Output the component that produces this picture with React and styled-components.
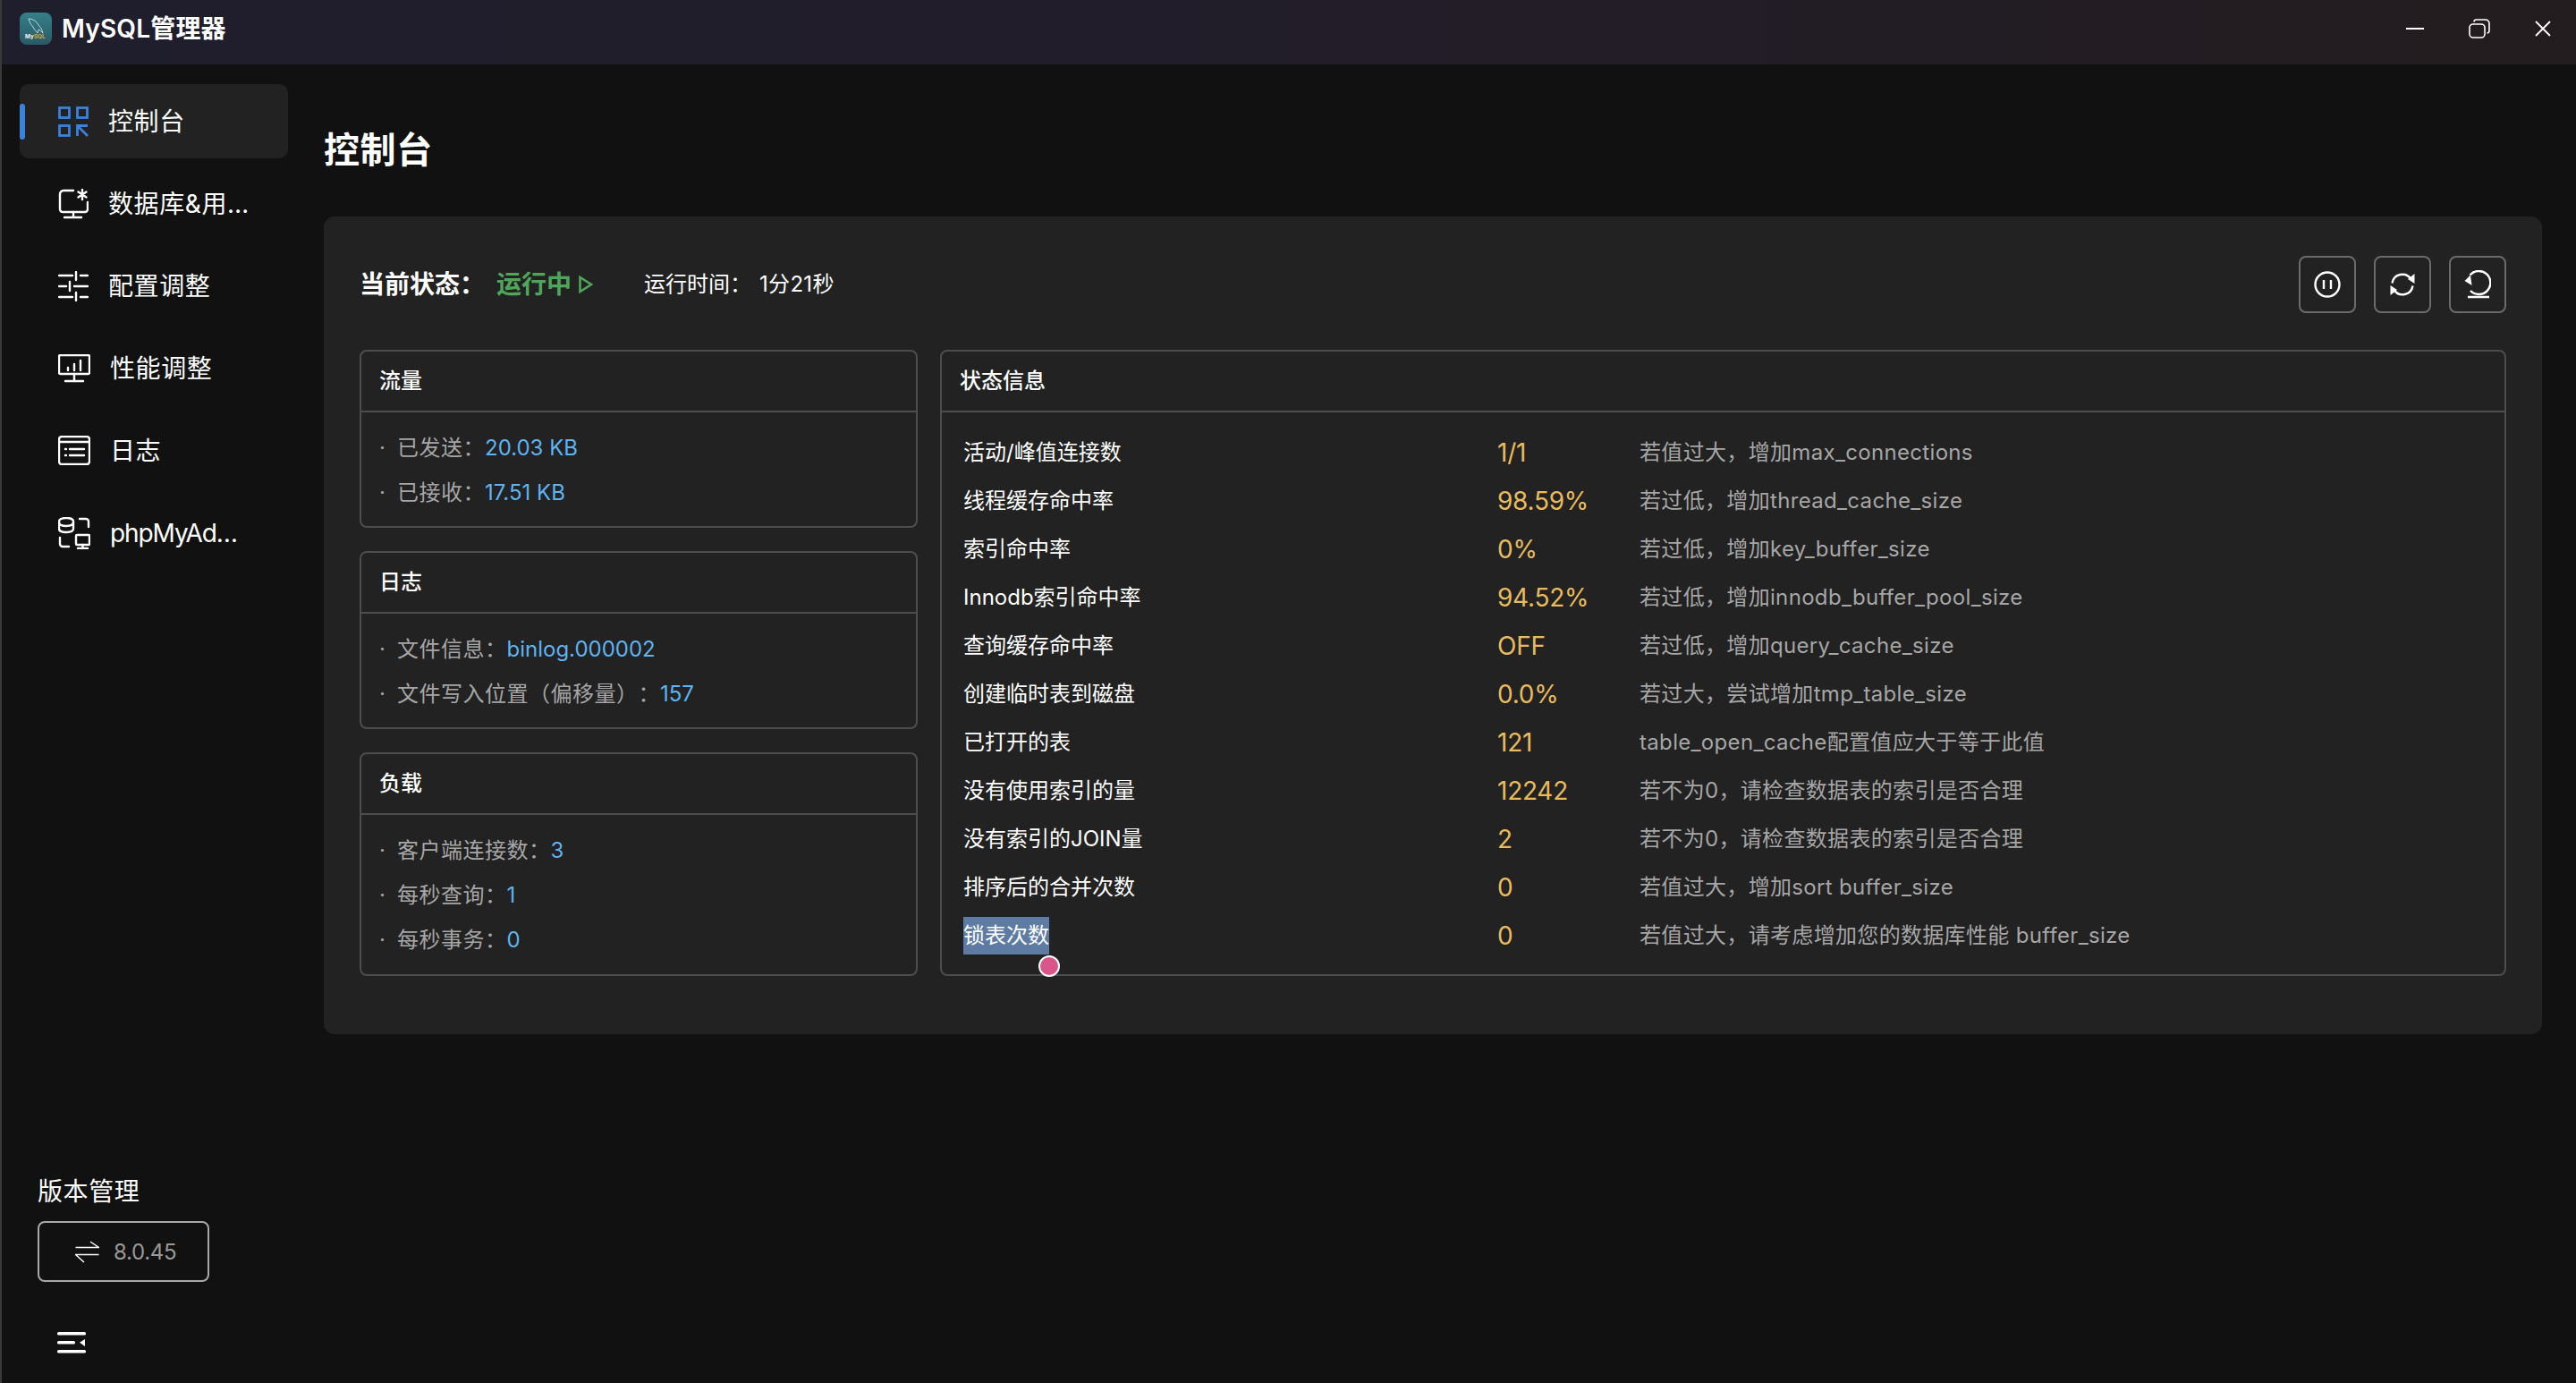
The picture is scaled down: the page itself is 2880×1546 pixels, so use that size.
import React from 'react';
import styled, { createGlobalStyle } from 'styled-components';

const GlobalStyle = createGlobalStyle`
  html, body {
    margin: 0;
    padding: 0;
    background: #111111;
  }

  body {
    font-family: Inter, "Noto Sans CJK SC", sans-serif;
    color: #ffffff;
    text-spacing-trim: space-all;
  }

  * {
    box-sizing: border-box;
  }
`;

const Shell = styled.div`
  display: flex;
  flex-direction: column;
  width: 2880px;
  height: 1546px;
  overflow: hidden;
  border-left: 2px solid #3a3a3a;
  background: #111111;
`;

const TitleBar = styled.header`
  display: flex;
  align-items: center;
  flex: 0 0 72px;
  padding: 0 28px 8px 20px;
  background: linear-gradient(90deg, #1f1e2c 0%, #211d2b 40%, #231d1f 100%);
`;

const AppName = styled.h1`
  flex: 1;
  margin: 0 0 0 11px;
  font-size: 28px;
  line-height: 36px;
  font-weight: 600;
  letter-spacing: 0.2px;
`;

const WindowControls = styled.div`
  display: flex;
  align-items: center;
  gap: 50px;

  svg {
    display: block;
  }
`;

const Body = styled.div`
  display: flex;
  flex: 1;
  min-height: 0;
`;

const Sidebar = styled.aside`
  display: flex;
  flex-direction: column;
  flex: 0 0 342px;
  padding: 22px 22px 33px 20px;
`;

const Nav = styled.nav`
  display: flex;
  flex-direction: column;
  gap: 9px;
  flex: 1;
`;

const NavItem = styled.div`
  position: relative;
  display: flex;
  align-items: center;
  gap: 22px;
  height: 83px;
  padding-left: 43px;
  border-radius: 10px;
  background: ${({ $active }) => ($active ? '#222222' : 'transparent')};

  ${({ $active }) =>
    $active &&
    `
    &::before {
      content: "";
      position: absolute;
      left: 0;
      top: 22px;
      width: 6px;
      height: 40px;
      border-radius: 3px;
      background: #3b82dd;
    }
  `}
`;

const NavIcon = styled.span`
  display: flex;
  align-items: center;
  justify-content: center;
  flex: 0 0 34px;
  height: 36px;
`;

const NavLabel = styled.span`
  padding-top: 1px;
  font-size: 28px;
  line-height: 40px;
  white-space: nowrap;
  letter-spacing: ${({ $tight }) => ($tight ? '-1.1px' : '0.6px')};
`;

const VersionBlock = styled.div`
  padding-left: 20px;
`;

const VersionTitle = styled.div`
  font-size: 28px;
  line-height: 40px;
  letter-spacing: 0.6px;
`;

const VersionButton = styled.button`
  display: flex;
  align-items: center;
  gap: 16px;
  width: 192px;
  height: 68px;
  margin-top: 13px;
  padding: 0 0 0 40px;
  border: 2px solid #a8a8a8;
  border-radius: 8px;
  background: transparent;
  color: #999999;
  font-family: inherit;
  font-size: 24px;
  letter-spacing: -0.3px;
`;

const CollapseButton = styled.div`
  display: flex;
  margin: 56px 0 0 22px;
`;

const Main = styled.main`
  flex: 1;
  min-width: 0;
  padding: 0 38px 0 18px;
`;

const PageTitle = styled.h2`
  margin: 0;
  height: 170px;
  font-size: 40px;
  line-height: 192px;
  font-weight: 700;
  letter-spacing: 0.6px;
`;

const Panel = styled.section`
  padding: 44px 40px 65px;
  border-radius: 12px;
  background: #222222;
`;

const StatusBar = styled.div`
  display: flex;
  align-items: center;
  height: 64px;
  margin-bottom: 41px;
  line-height: 34px;
`;

const StatusName = styled.span`
  font-size: 28px;
  font-weight: 700;
`;

const StatusValue = styled.span`
  display: flex;
  align-items: center;
  gap: 8px;
  margin-left: 13px;
  color: #4fa65a;
  font-size: 28px;
  font-weight: 600;
`;

const Uptime = styled.span`
  margin-left: 57px;
  font-size: 24px;
`;

const UptimeValue = styled.span`
  margin-left: 9px;
  font-size: 24px;
  letter-spacing: 0.3px;
`;

const Actions = styled.div`
  display: flex;
  gap: 20px;
  margin-left: auto;
`;

const ActionButton = styled.button`
  display: flex;
  align-items: center;
  justify-content: center;
  width: 64px;
  height: 64px;
  padding: 0;
  border: 2px solid #6b6b6b;
  border-radius: 8px;
  background: transparent;
`;

const Columns = styled.div`
  display: grid;
  grid-template-columns: 624px 1fr;
  gap: 25px;
`;

const LeftColumn = styled.div`
  display: flex;
  flex-direction: column;
  gap: 26px;

  > :last-child {
    padding-bottom: 1px;
  }
`;

const Card = styled.div`
  border: 2px solid #4d4d4d;
  border-radius: 8px;
`;

const CardHeader = styled.div`
  display: flex;
  align-items: center;
  height: 68px;
  padding: 0 0 1px 20px;
  border-bottom: 2px solid #4d4d4d;
  font-size: 24px;
  line-height: 34px;
  font-weight: 500;
`;

const CardBody = styled.div`
  padding: 15px 20px 12px;
`;

const InfoRow = styled.div`
  height: 50px;
  line-height: 50px;
  font-size: 24px;
  letter-spacing: 0.5px;
  color: #a6a6a6;

  &::before {
    content: "·";
    display: inline-block;
    width: 20px;
    letter-spacing: 0;
  }
`;

const InfoValue = styled.span`
  letter-spacing: 0;
  color: #5fb3ef;
`;

const StatusBody = styled.div`
  padding: 18px 24px 0;
`;

const StatusRow = styled.div`
  display: grid;
  grid-template-columns: 597px 159px 1fr;
  align-items: center;
  height: 54px;
`;

const StatusLabel = styled.div`
  font-size: 24px;
  line-height: 34px;
`;

const StatusNumber = styled.div`
  padding-bottom: 1px;
  font-size: 28px;
  line-height: 34px;
  letter-spacing: -0.25px;
  color: #e8bb5f;
`;

const StatusHint = styled.div`
  font-size: 24px;
  line-height: 34px;
  letter-spacing: 0.33px;
  color: #a6a6a6;
`;

const Selection = styled.span`
  position: relative;
  display: inline-block;
  height: 42px;
  line-height: 42px;
  background: #5e7ca3;
`;

const SelectionHandle = styled.span`
  position: absolute;
  top: calc(100% + 1px);
  left: calc(100% - 12px);
  width: 24px;
  height: 24px;
  border: 2px solid #ffffff;
  border-radius: 50%;
  background: #d9568a;
`;

const LogoIcon = () => (
  <svg width="36" height="36" viewBox="0 0 36 36">
    <defs>
      <linearGradient id="logo-bg" x1="0" y1="0" x2="0" y2="1">
        <stop offset="0" stopColor="#34808a" />
        <stop offset="1" stopColor="#2a5a64" />
      </linearGradient>
    </defs>
    <rect width="36" height="36" rx="8" fill="url(#logo-bg)" />
    <path
      d="M10 7c5 0 9 3 11 7 2 2 4 5 5 9-2-2-3-3-5-4 0 2-1 3-1 4-2-3-4-4-5-7-2-2-4-5-5-9z"
      fill="none"
      stroke="#e6eef0"
      strokeWidth="0.8"
    />
    <text x="6" y="29" fontSize="6.4" fontWeight="700" fontFamily="Inter, sans-serif" fill="#f2f2f2">
      My
      <tspan fill="#d9a93f">SQL</tspan>
    </text>
  </svg>
);

const MinimizeIcon = () => (
  <svg width="20" height="4" viewBox="0 0 20 4">
    <path d="M0 2h20" stroke="#fff" strokeWidth="2" />
  </svg>
);

const RestoreIcon = () => (
  <svg width="24" height="22" viewBox="0 0 24 22" fill="none" stroke="#fff" strokeWidth="1.6">
    <rect x="1" y="6" width="17" height="15" rx="4" />
    <path d="M6 3.5C6 2 7 1 8.5 1H19c2 0 4 2 4 4v8c0 1.5-1 3-2.5 3" />
  </svg>
);

const CloseIcon = () => (
  <svg width="18" height="18" viewBox="0 0 18 18">
    <path d="M1 1l16 16M17 1L1 17" stroke="#fff" strokeWidth="1.8" />
  </svg>
);

const DashboardIcon = () => (
  <svg width="34" height="34" viewBox="0 0 34 34" fill="none" stroke="#3b82dd" strokeWidth="2.8">
    <rect x="1.5" y="1.5" width="11" height="11" />
    <rect x="21.5" y="1.5" width="11" height="11" />
    <rect x="1.5" y="21.5" width="11" height="11" />
    <path d="M33 21.5H21.5V33M22 22l11 11" />
  </svg>
);

const DatabaseUserIcon = () => (
  <svg width="34" height="34" viewBox="0 0 34 34" fill="none" stroke="#fff" strokeWidth="2.4" strokeLinecap="round">
    <path d="M17 2H6a4 4 0 0 0-4 4v17a3 3 0 0 0 3 3h25a3 3 0 0 0 3-3v-8" />
    <path d="M17 26v6M7 32h19" />
    <path d="M27 1v11M22.5 3.5l9 6M31.5 3.5l-9 6" />
  </svg>
);

const SlidersIcon = () => (
  <svg width="34" height="34" viewBox="0 0 34 34" fill="none" stroke="#fff" strokeWidth="2.4" strokeLinecap="round">
    <path d="M1 5h15M20 1v9M25 5h8" />
    <path d="M1 17h8M13 12v10M18 17h15" />
    <path d="M1 29h15M20 24v9M25 29h8" />
  </svg>
);

const MonitorChartIcon = () => (
  <svg width="36" height="32" viewBox="0 0 36 32" fill="none" stroke="#fff" strokeWidth="2.4" strokeLinecap="round">
    <rect x="1" y="1" width="34" height="21" rx="1.5" />
    <path d="M18 22v8M8 30h20" />
    <path d="M11 15v3M18 11v7M25 7v11" />
  </svg>
);

const LogIcon = () => (
  <svg width="36" height="33" viewBox="0 0 36 33" fill="none" stroke="#fff" strokeWidth="2.4" strokeLinecap="round">
    <rect x="1" y="1" width="34" height="31" rx="3" />
    <path d="M1 7h34" />
    <path d="M8 15h1M8 22h1M13 15h16M13 22h16" />
  </svg>
);

const PhpAdminIcon = () => (
  <svg width="36" height="36" viewBox="0 0 36 36" fill="none" stroke="#fff" strokeWidth="2.4" strokeLinecap="round">
    <path d="M1 5c0-2.5 3-4 8-4s8 1.5 8 4v8c0 2.5-3 4-8 4s-8-1.5-8-4z" />
    <path d="M1 6c0 2.5 3 4 8 4s8-1.5 8-4" />
    <path d="M24 2h7a3 3 0 0 1 3 3v6" />
    <path d="M2 23v7a3 3 0 0 0 3 3h7" />
    <rect x="20" y="20" width="15" height="11" rx="1" />
    <path d="M27.5 31v4M22 35h11" />
  </svg>
);

const SwapIcon = () => (
  <svg width="27" height="25" viewBox="0 0 27 25" fill="none" stroke="#fff" strokeWidth="1.5">
    <path d="M0.5 7.5H26.5L17 1" />
    <path d="M26.5 15.5H0.5L10 24" />
  </svg>
);

const CollapseIcon = () => (
  <svg width="32" height="24" viewBox="0 0 32 24" fill="#fff">
    <rect width="32" height="3.5" rx="1.5" />
    <rect y="10" width="20" height="3.5" rx="1.5" />
    <rect y="20" width="32" height="3.5" rx="1.5" />
    <polygon points="25,11.7 31,8 31,16" />
  </svg>
);

const PlayOutline = () => (
  <svg width="16" height="20" viewBox="0 0 16 20" fill="none" stroke="#4fa65a" strokeWidth="2.6">
    <path d="M1.5 2v16l12.5-8z" />
  </svg>
);

const PauseIcon = () => (
  <svg width="30" height="30" viewBox="0 0 30 30" fill="none" stroke="#fff" strokeWidth="2.4">
    <circle cx="15" cy="15" r="13.5" />
    <path d="M11 10v10M19 10v10" />
  </svg>
);

const RefreshIcon = () => (
  <svg width="28" height="28" viewBox="0 0 28 28" fill="none" stroke="#fff" strokeWidth="2.4">
    <path d="M2.5 12.5A11.5 11.5 0 0 1 23.5 8" />
    <path d="M25.5 15.5A11.5 11.5 0 0 1 4.5 20" />
    <polygon points="27.5,2 27.5,13 20,8" fill="#fff" stroke="none" />
    <polygon points="0.5,26 0.5,15 8,20" fill="#fff" stroke="none" />
  </svg>
);

const ResetIcon = () => (
  <svg width="30" height="32" viewBox="0 0 30 32" fill="none" stroke="#fff" strokeWidth="2.5">
    <path d="M6.5 5.5A13 13 0 1 1 7 23" />
    <polygon points="0.5,12 7,5.5 8.5,17" fill="#fff" stroke="none" />
    <path d="M4 30H28" />
  </svg>
);

const navItems = [
  { label: '控制台', icon: <DashboardIcon />, active: true },
  { label: '数据库&用…', icon: <DatabaseUserIcon /> },
  { label: '配置调整', icon: <SlidersIcon /> },
  { label: '性能调整', icon: <MonitorChartIcon /> },
  { label: '日志', icon: <LogIcon /> },
  { label: 'phpMyAd…', icon: <PhpAdminIcon />, tight: true },
];

const infoCards = [
  {
    title: '流量',
    rows: [
      ['已发送：', '20.03 KB'],
      ['已接收：', '17.51 KB'],
    ],
  },
  {
    title: '日志',
    rows: [
      ['文件信息：', 'binlog.000002'],
      ['文件写入位置（偏移量）：', '157'],
    ],
  },
  {
    title: '负载',
    rows: [
      ['客户端连接数：', '3'],
      ['每秒查询：', '1'],
      ['每秒事务：', '0'],
    ],
  },
];

const statusRows = [
  ['活动/峰值连接数', '1/1', '若值过大，增加max_connections'],
  ['线程缓存命中率', '98.59%', '若过低，增加thread_cache_size'],
  ['索引命中率', '0%', '若过低，增加key_buffer_size'],
  ['Innodb索引命中率', '94.52%', '若过低，增加innodb_buffer_pool_size'],
  ['查询缓存命中率', 'OFF', '若过低，增加query_cache_size'],
  ['创建临时表到磁盘', '0.0%', '若过大，尝试增加tmp_table_size'],
  ['已打开的表', '121', 'table_open_cache配置值应大于等于此值'],
  ['没有使用索引的量', '12242', '若不为0，请检查数据表的索引是否合理'],
  ['没有索引的JOIN量', '2', '若不为0，请检查数据表的索引是否合理'],
  ['排序后的合并次数', '0', '若值过大，增加sort buffer_size'],
  ['锁表次数', '0', '若值过大，请考虑增加您的数据库性能 buffer_size'],
];

export default function App() {
  return (
    <>
      <GlobalStyle />
      <Shell>
        <TitleBar>
          <LogoIcon />
          <AppName>MySQL管理器</AppName>
          <WindowControls>
            <MinimizeIcon />
            <RestoreIcon />
            <CloseIcon />
          </WindowControls>
        </TitleBar>
        <Body>
          <Sidebar>
            <Nav>
              {navItems.map((item) => (
                <NavItem key={item.label} $active={item.active}>
                  <NavIcon>{item.icon}</NavIcon>
                  <NavLabel $tight={item.tight}>{item.label}</NavLabel>
                </NavItem>
              ))}
            </Nav>
            <VersionBlock>
              <VersionTitle>版本管理</VersionTitle>
              <VersionButton>
                <SwapIcon />
                8.0.45
              </VersionButton>
              <CollapseButton>
                <CollapseIcon />
              </CollapseButton>
            </VersionBlock>
          </Sidebar>
          <Main>
            <PageTitle>控制台</PageTitle>
            <Panel>
              <StatusBar>
                <StatusName>当前状态：</StatusName>
                <StatusValue>
                  运行中
                  <PlayOutline />
                </StatusValue>
                <Uptime>运行时间：</Uptime>
                <UptimeValue>1分21秒</UptimeValue>
                <Actions>
                  <ActionButton>
                    <PauseIcon />
                  </ActionButton>
                  <ActionButton>
                    <RefreshIcon />
                  </ActionButton>
                  <ActionButton>
                    <ResetIcon />
                  </ActionButton>
                </Actions>
              </StatusBar>
              <Columns>
                <LeftColumn>
                  {infoCards.map((card) => (
                    <Card key={card.title}>
                      <CardHeader>{card.title}</CardHeader>
                      <CardBody>
                        {card.rows.map(([label, value]) => (
                          <InfoRow key={label}>
                            {label}
                            <InfoValue>{value}</InfoValue>
                          </InfoRow>
                        ))}
                      </CardBody>
                    </Card>
                  ))}
                </LeftColumn>
                <Card>
                  <CardHeader>状态信息</CardHeader>
                  <StatusBody>
                    {statusRows.map(([label, value, hint], i) => (
                      <StatusRow key={label}>
                        <StatusLabel>
                          {i === statusRows.length - 1 ? (
                            <Selection>
                              {label}
                              <SelectionHandle />
                            </Selection>
                          ) : (
                            label
                          )}
                        </StatusLabel>
                        <StatusNumber>{value}</StatusNumber>
                        <StatusHint>{hint}</StatusHint>
                      </StatusRow>
                    ))}
                  </StatusBody>
                </Card>
              </Columns>
            </Panel>
          </Main>
        </Body>
      </Shell>
    </>
  );
}
